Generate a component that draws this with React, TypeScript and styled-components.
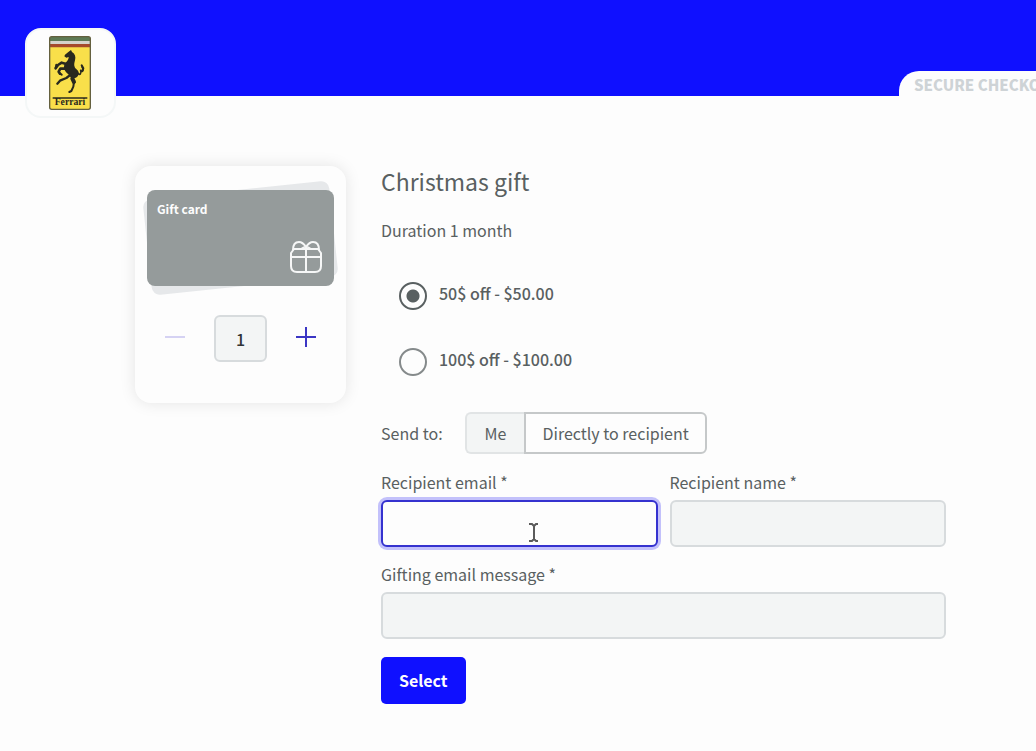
import React, { useState } from "react";
import styled, { createGlobalStyle } from "styled-components";

const GlobalStyle = createGlobalStyle`
  *, *::before, *::after { box-sizing: border-box; }
  body {
    margin: 0;
    background: #fdfdfd;
    color: #596061;
    font-family: "Noto Sans CJK SC", "Noto Sans", sans-serif;
    font-size: 16px;
    line-height: 22px;
  }
  button, input { font: inherit; color: inherit; margin: 0; }
`;

const Header = styled.header`
  position: relative;
  display: flex;
  justify-content: flex-end;
  align-items: flex-end;
  height: 96px;
  background: #0f10ff;
`;

const LogoTile = styled.a`
  position: absolute;
  top: 28px;
  left: 25px;
  display: flex;
  padding: 6px 0 0 22px;
  width: 91px;
  height: 90px;
  border: 2px solid #f4f7f7;
  border-radius: 16px;
  background: #fdfdfd;
`;

const SecureTab = styled.div`
  width: 137px;
  height: 25px;
  padding: 3px 0 0 15px;
  overflow: hidden;
  white-space: nowrap;
  border-top-left-radius: 20px;
  background: #fdfdfd;
  color: #ced3d6;
  font-size: 15px;
  font-weight: 900;
`;

const Main = styled.main`
  display: flex;
  align-items: flex-start;
  gap: 35px;
  padding: 70px 90px 47px 135px;
`;

const ProductCard = styled.section`
  flex: none;
  width: 211px;
  padding: 24px 12px 41px;
  border-radius: 16px;
  background: #fdfdfd;
  box-shadow: 0 0 16px rgba(0, 0, 0, 0.1);
`;

const GiftCard = styled.div`
  position: relative;
  z-index: 0;
  display: flex;
  flex-direction: column;
  justify-content: space-between;
  height: 96px;
  padding: 8px 12px 12px 10px;
  border-radius: 8px;
  color: #fdfdfd;
  font-size: 12px;
  font-weight: 700;

  &::before {
    content: "";
    position: absolute;
    inset: 0;
    z-index: -2;
    border-radius: 8px;
    background: #e6e8ea;
    transform: rotate(-6deg);
  }
  &::after {
    content: "";
    position: absolute;
    inset: 0;
    z-index: -1;
    border-radius: 8px;
    background: #959b9b;
  }
  svg { align-self: flex-end; }
`;

const Stepper = styled.div`
  display: flex;
  justify-content: space-between;
  align-items: center;
  padding: 29px 12px 0;
`;

const StepButton = styled.button`
  display: flex;
  padding: 2px 6px 6px;
  border: 0;
  background: none;
  color: #3b36c4;
  &:disabled { color: #d5d2f3; }
`;

const field = `
  border: 2px solid #d7dbdd;
  border-radius: 6px;
  background: #f3f5f5;
  outline: none;
`;

const Quantity = styled.input`
  ${field}
  width: 53px;
  height: 47px;
  padding: 0;
  text-align: center;
  color: #303435;
  font-weight: 500;
`;

const Form = styled.form`
  flex: 1;
  min-width: 0;
`;

const Title = styled.h1`
  margin: 0;
  font-size: 23px;
  line-height: 30px;
  font-weight: 400;
`;

const Duration = styled.p`
  margin: 23px 0 41px;
`;

const Options = styled.div`
  display: flex;
  flex-direction: column;
  gap: 38px;
  padding-left: 18px;
`;

const Option = styled.label`
  display: flex;
  align-items: flex-start;
  gap: 12px;
  font-weight: 500;
`;

const Radio = styled.input`
  appearance: none;
  flex: none;
  width: 28px;
  height: 28px;
  border: 2px solid #858a8b;
  border-radius: 50%;
  background: #fdfdfd;
  &:checked {
    border-color: #596061;
    background: radial-gradient(circle, #596061 6px, #fdfdfd 7px);
  }
`;

const SendRow = styled.div`
  display: flex;
  align-items: center;
  gap: 22px;
  margin: 36px 0 17px;
`;

const Segments = styled.div`
  display: flex;
`;

const Segment = styled.button<{ $selected?: boolean }>`
  height: 42px;
  padding: 0 16px;
  border: 2px solid ${(p) => (p.$selected ? "#c5c8c9" : "#e1e4e5")};
  background: ${(p) => (p.$selected ? "#fdfdfd" : "#f3f5f5")};
  &:first-child {
    padding: 0 18px;
    border-radius: 6px 0 0 6px;
    border-right: 0;
  }
  &:last-child { border-radius: 0 6px 6px 0; }
`;

const Fields = styled.div`
  display: grid;
  grid-template-columns: 1fr 1fr;
  gap: 16px 12px;
`;

const Field = styled.div<{ $wide?: boolean }>`
  position: relative;
  display: flex;
  flex-direction: column;
  gap: 7px;
  grid-column: ${(p) => (p.$wide ? "1 / -1" : "auto")};
`;

const TextInput = styled.input<{ $active?: boolean }>`
  ${field}
  width: 100%;
  height: 47px;
  padding: 0 12px;
  ${(p) =>
    p.$active &&
    `
    border-color: #3532cf;
    background: #fdfdfd;
    box-shadow: 0 0 0 3px #c3c1fb;
  `}
`;

const Pointer = styled.svg`
  position: absolute;
  top: 51px;
  left: 147px;
  pointer-events: none;
`;

const Submit = styled.button`
  height: 47px;
  margin-top: 18px;
  padding: 0 18px 2px;
  border: 0;
  border-radius: 5px;
  background: #0f10ff;
  color: #fdfdfd;
  font-weight: 700;
`;

const BrandMark = () => (
  <svg width="42" height="74" viewBox="0 0 126 222" role="img" aria-label="Ferrari">
    <rect x="2" y="2" width="122" height="218" rx="6" fill="#f9df4a" />
    <path d="M2 8q0-6 6-6h110q6 0 6 6v8H2z" fill="#5d7a55" />
    <path d="M2 15h122v10H2z" fill="#d5d2cb" />
    <path d="M2 24h122v10H2z" fill="#a5492c" />
    <rect x="2" y="2" width="122" height="218" rx="6" fill="none" stroke="#64603f" strokeWidth="4" />
    <path
      d="M66 42l3 6c9 5 12 14 9 25-2 9-4 14 0 22 5 6 12 8 11 18-1 8-6 12-13 13-9 1-14-4-18-11-6-5-12-11-13-20-1-8 4-14 9-19 3-4 5-8 5-13l-7 2-6-4 2-5 10-8z"
      fill="#29291e"
    />
    <g fill="none" stroke="#29291e" strokeLinecap="round" strokeLinejoin="round">
      <path d="M52 84L38 80 27 87 20 97M50 98L34 98 29 107 33 113" strokeWidth="8" />
      <path d="M20 95l2-9M33 113l5 3" strokeWidth="6" />
      <path d="M74 118L70 128 75 138" strokeWidth="12" />
      <path d="M75 138L73 152 67 165 61 168" strokeWidth="6" />
      <path d="M65 116L52 126 33 134 25 143" strokeWidth="7" />
      <path d="M85 110C93 121 98 111 95 103 101 110 106 101 99 93" strokeWidth="5" />
      <path d="M99 106L103 97 98 88" strokeWidth="6" />
    </g>
    <text x="63" y="207" textAnchor="middle" fontFamily="Liberation Serif, serif" fontWeight="700" fontSize="29" fill="#29291e">
      Ferrari
    </text>
    <path d="M11 186h104" stroke="#29291e" strokeWidth="4" />
  </svg>
);

const GiftIcon = () => (
  <svg width="32" height="34" viewBox="0 0 32 34" fill="none" stroke="#f6f7f7" strokeWidth="2" strokeLinejoin="round" aria-hidden="true">
    <path d="M4 9h24l3 4v13q0 6-6 6H7q-6 0-6-6V13z" />
    <path d="M1 17h30M16 6v26" />
    <path d="M3 10C3 5 5 2 9 2c3 0 5 2 7 5 2-3 4-5 7-5 4 0 6 3 6 8M16 6l-5 3M16 6l5 3" />
  </svg>
);

const StepIcon = ({ plus }: { plus?: boolean }) => (
  <svg width="20" height="20" viewBox="0 0 20 20" stroke="currentColor" strokeWidth="2" aria-hidden="true">
    <path d={plus ? "M0 10h20M10 0v20" : "M0 10h20"} />
  </svg>
);

const amounts = ["50$ off - $50.00", "100$ off - $100.00"];

export default function App() {
  const [quantity, setQuantity] = useState(1);
  const [amount, setAmount] = useState(0);
  const [toRecipient, setToRecipient] = useState(true);

  return (
    <>
      <GlobalStyle />
      <Header>
        <LogoTile href="#" aria-label="Ferrari">
          <BrandMark />
        </LogoTile>
        <SecureTab>SECURE CHECKOUT</SecureTab>
      </Header>
      <Main>
        <ProductCard>
          <GiftCard>
            Gift card
            <GiftIcon />
          </GiftCard>
          <Stepper>
            <StepButton type="button" aria-label="Decrease" disabled={quantity === 1} onClick={() => setQuantity(quantity - 1)}>
              <StepIcon />
            </StepButton>
            <Quantity aria-label="Quantity" value={quantity} readOnly />
            <StepButton type="button" aria-label="Increase" onClick={() => setQuantity(quantity + 1)}>
              <StepIcon plus />
            </StepButton>
          </Stepper>
        </ProductCard>
        <Form onSubmit={(e) => e.preventDefault()}>
          <Title>Christmas gift</Title>
          <Duration>Duration 1 month</Duration>
          <Options>
            {amounts.map((label, i) => (
              <Option key={label}>
                <Radio type="radio" name="amount" checked={amount === i} onChange={() => setAmount(i)} />
                {label}
              </Option>
            ))}
          </Options>
          <SendRow>
            <span>Send to:</span>
            <Segments>
              <Segment type="button" $selected={!toRecipient} onClick={() => setToRecipient(false)}>
                Me
              </Segment>
              <Segment type="button" $selected={toRecipient} onClick={() => setToRecipient(true)}>
                Directly to recipient
              </Segment>
            </Segments>
          </SendRow>
          <Fields>
            <Field>
              <label htmlFor="email">Recipient email *</label>
              <TextInput id="email" type="email" $active />
              <Pointer width="11" height="21" viewBox="0 0 11 21" fill="none" stroke="#5b5b5b" strokeWidth="2" aria-hidden="true">
                <path d="M1 2h3l2 2 2-2h2M1 19h3l2-2 2 2h2M6 4v13" />
              </Pointer>
            </Field>
            <Field>
              <label htmlFor="name">Recipient name *</label>
              <TextInput id="name" type="text" />
            </Field>
            <Field $wide>
              <label htmlFor="message">Gifting email message *</label>
              <TextInput id="message" type="text" />
            </Field>
          </Fields>
          <Submit type="submit">Select</Submit>
        </Form>
      </Main>
    </>
  );
}
